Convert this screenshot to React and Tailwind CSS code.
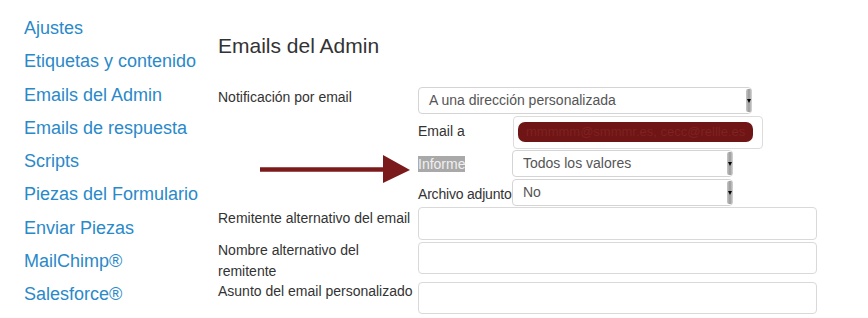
const NAV_ITEMS = [
  "Ajustes",
  "Etiquetas y contenido",
  "Emails del Admin",
  "Emails de respuesta",
  "Scripts",
  "Piezas del Formulario",
  "Enviar Piezas",
  "MailChimp®",
  "Salesforce®",
];

function SelectBox({ value, className }) {
  return (
    <div
      className={`flex items-stretch bg-white border border-[#d4d4d4] rounded-[4px] ${className}`}
    >
      <div className="flex-1 flex items-center pl-[10px] text-[14px] text-[#555] whitespace-nowrap">
        {value}
      </div>
      <div className="w-[6px] -mr-px my-[1px] rounded-[2px] bg-gradient-to-r from-[#c8c8c8] via-[#9a9a9a] to-[#d8d8d8] flex items-center justify-center">
        <span className="block w-0 h-0 border-l-[2px] border-r-[2px] border-t-[4px] border-l-transparent border-r-transparent border-t-black" />
      </div>
    </div>
  );
}

function TextBox({ className }) {
  return (
    <div
      className={`bg-white border border-[#d9d9d9] rounded-[4px] ${className}`}
    />
  );
}

export default function App() {
  return (
    <div className="relative w-[868px] h-[318px] bg-white overflow-hidden font-['Liberation_Sans',Arial,sans-serif] flex">
      {/* sidebar */}
      <nav className="w-[218px] shrink-0 pl-6 pt-3 flex flex-col">
        {NAV_ITEMS.map((item) => (
          <a
            key={item}
            className="text-[18px] leading-[33.3px] text-[#2a89c9] whitespace-nowrap"
          >
            {item}
          </a>
        ))}
      </nav>

      {/* main */}
      <main className="flex-1 pt-[34px]">
        <h2 className="text-[21px] leading-6 text-[#333] mb-[29px]">
          Emails del Admin
        </h2>

        <div className="grid grid-cols-[200px_auto] items-start text-[14px] text-[#333]">
          <div className="leading-5">Notificación por email</div>
          <div className="flex flex-col">
            <SelectBox value="A una dirección personalizada" className="w-[334px] h-[27px]" />

            <div className="grid grid-cols-[94px_auto] items-start mt-[2px]">
              <div className="leading-5 pt-[5px]">Email a</div>
              <div className="w-[250px] h-[33px] border border-[#dcdcdc] rounded-[4px] pl-[4px] pr-[9px] pt-[5px] ml-px">
                <div className="h-[20px] rounded-[7px] bg-[#6f1515] text-[#7e2222] text-[13px] leading-[20px] px-[8px] whitespace-nowrap overflow-hidden">
                  mmmmm@smmmr.es, cecc@rellle.es
                </div>
              </div>

              <div className="leading-5 pt-[4px] mt-px">
                <span className="bg-[#a9a9a9] text-[#f0f0f0]">Informe</span>
              </div>
              <SelectBox value="Todos los valores" className="w-[221px] h-[27px] mt-px" />

              <div className="leading-5 pt-[5px] mt-[2px] whitespace-nowrap tracking-[-0.2px]">
                Archivo adjunto
              </div>
              <SelectBox value="No" className="w-[221px] h-[27px] mt-[2px]" />
            </div>
          </div>

          <div className="leading-[26px] -mt-px">
            Remitente alternativo del email
          </div>
          <TextBox className="w-[399px] h-[33px] mt-[1px]" />

          <div className="leading-[21px] mt-0">
            Nombre alternativo del remitente
          </div>
          <TextBox className="w-[399px] h-[32px] mt-[2px]" />

          <div className="leading-[26px] -mt-[4px]">
            Asunto del email personalizado
          </div>
          <TextBox className="w-[399px] h-[32px]" />
        </div>
      </main>

      {/* annotation arrow */}
      <svg
        className="absolute left-[260px] top-[153px]"
        width="152"
        height="32"
        viewBox="0 0 152 32"
      >
        <line x1="0" y1="16.5" x2="126" y2="16.5" stroke="#7b1a1a" strokeWidth="4.5" />
        <polygon points="123,2 150,17 123,30" fill="#7b1a1a" />
      </svg>
    </div>
  );
}
